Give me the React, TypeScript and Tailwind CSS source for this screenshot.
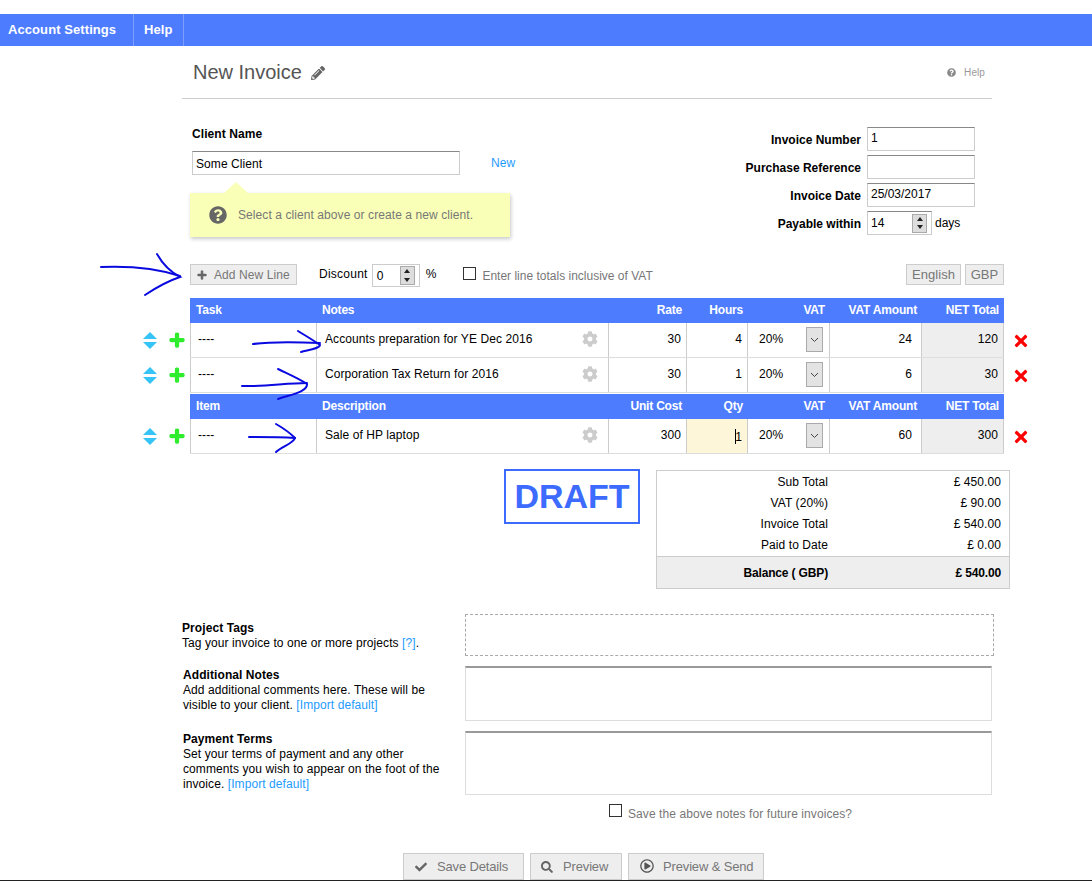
import { FaCheck, FaCog, FaPencilAlt, FaPlus, FaQuestionCircle, FaRegPlayCircle, FaSearch, FaTimes } from "react-icons/fa";

const cols = "grid grid-cols-[127px_292px_78px_61px_82px_92px_82px] w-[814px]";

const Stepper = () => (
  <span className="ml-auto mr-[4px] flex h-[19px] w-[15px] flex-col items-center justify-around border border-[#aaa] bg-[#ddd]">
    <span className="h-0 w-0 border-x-[3px] border-b-[4px] border-x-transparent border-b-[#222]" />
    <span className="h-0 w-0 border-x-[3px] border-t-[4px] border-x-transparent border-t-[#222]" />
  </span>
);

const Field = ({ value, className }: { value: string; className: string }) => (
  <input
    readOnly
    value={value}
    className={`border border-[#ccc] border-t-[#888] bg-white px-[3px] text-[12px] text-black outline-none ${className}`}
  />
);

const HeaderRow = ({ labels }: { labels: string[] }) => (
  <div className="ml-[190px] h-[25px] w-[814px]">
    <div className={`${cols} h-full items-center bg-[#4d7cff] pb-[2px] text-[12px] font-bold tracking-[-0.2px] text-white`}>
      <span className="pl-[6px]">{labels[0]}</span>
      <span className="pl-[5px]">{labels[1]}</span>
      <span className="pr-[5px] text-right">{labels[2]}</span>
      <span className="pr-[5px] text-right">{labels[3]}</span>
      <span className="pr-[5px] text-right">VAT</span>
      <span className="pr-[5px] text-right">VAT Amount</span>
      <span className="pr-[5px] text-right">NET Total</span>
    </div>
  </div>
);

type Line = { notes: string; rate: string; qty: string; vat: string; net: string; editing?: boolean };

const LineRow = ({ line }: { line: Line }) => (
  <div className="flex h-[35px]">
    <div className="flex w-[190px] justify-end pt-[8px]">
      <span className="mr-[12px] flex flex-col gap-[3px] pt-[1px]">
        <span className="h-0 w-0 border-x-[7px] border-b-[7px] border-x-transparent border-b-[#35c4f5]" />
        <span className="h-0 w-0 border-x-[7px] border-t-[7px] border-x-transparent border-t-[#35c4f5]" />
      </span>
      <FaPlus className="mr-[5px] mt-[1px] text-[16px] text-[#2fec2f]" stroke="currentColor" strokeWidth={40} />
    </div>
    <div className={`${cols} border-b border-b-[#ddd] text-[12px] text-black`}>
      <div className="border-l border-r border-[#ccc] pl-[7px] pt-[7px]">----</div>
      <div className="flex justify-between border-r border-[#ccc] pl-[8px] pr-[10px] pt-[7px]">
        <span>{line.notes}</span>
        <FaCog className="mt-[1px] text-[16px] text-[#ccc]" />
      </div>
      <div className="border-r border-[#ccc] pr-[5px] pt-[7px] text-right">{line.rate}</div>
      <div className={`border-r border-[#ccc] pr-[5px] pt-[7px] text-right ${line.editing ? "bg-[#fdf6d8]" : ""}`}>
        {line.editing && <span className="mr-[-1px] inline-block h-[15px] w-px translate-y-[3px] bg-black" />}
        {line.qty}
      </div>
      <div className="flex justify-between border-r border-[#ccc] pl-[11px] pr-[6px] pt-[4px]">
        <span className="pt-[3px]">20%</span>
        <span className="flex h-[25px] w-[17px] items-center justify-center border border-[#aaa] bg-[#e3e3e3]">
          <svg width="9" height="6" viewBox="0 0 9 6" fill="none" stroke="#444" strokeWidth="1">
            <path d="M1 1l3.5 3.5L8 1" />
          </svg>
        </span>
      </div>
      <div className="border-r border-[#ccc] pr-[9px] pt-[7px] text-right">{line.vat}</div>
      <div className="border-r border-[#ccc] bg-[#eee] pr-[5px] pt-[7px] text-right">{line.net}</div>
    </div>
    <FaTimes className="ml-[8px] mt-[9px] text-[18px] text-[#f00]" />
  </div>
);

const Total = ({ label, value }: { label: string; value: string }) => (
  <div className="flex h-[21px] items-center justify-end">
    <span>{label}</span>
    <span className="w-[181px] pr-[8px] text-right">{value}</span>
  </div>
);

const ActionButton = ({ icon, label, className }: { icon: React.ReactNode; label: string; className: string }) => (
  <button className={`flex h-[27px] items-center border border-[#ccc] bg-[#eee] text-[13px] tracking-[-0.15px] text-[#777] ${className}`}>
    {icon}
    {label}
  </button>
);

const Link = ({ children }: { children: React.ReactNode }) => <a className="text-[#1e9bff]">{children}</a>;

export default function App() {
  return (
    <div className="relative h-[881px] w-[1092px] overflow-hidden bg-white font-['Liberation_Sans',Arial,sans-serif] text-[12px] tracking-[0.08px]">
      <nav className="mt-[14px] flex h-[32px] items-center bg-[#4d7cff] text-[13px] font-bold text-white">
        <span className="flex h-full w-[134px] items-center border-r border-[#7d9fff] pl-[8px]">Account Settings</span>
        <span className="flex h-full w-[50px] items-center border-r border-[#7d9fff] pl-[10px]">Help</span>
      </nav>

      <header className="ml-[182px] flex h-[53px] w-[810px] items-center justify-between border-b border-[#ccc] pl-[11px]">
        <div className="flex items-center gap-[9px]">
          <h1 className="text-[20px] tracking-normal text-[#555]">New Invoice</h1>
          <FaPencilAlt className="mt-[2px] text-[14px] text-[#666]" />
        </div>
        <div className="flex items-center gap-[8px] pr-[7px] text-[10px] text-[#999]">
          <FaQuestionCircle className="text-[9px] text-[#888]" />
          Help
        </div>
      </header>

      <section className="mt-[27px] flex h-[138px] w-[975px] justify-between pl-[190px]">
        <div className="w-[330px]">
          <label className="block pl-[2px] pt-[1px] font-bold leading-[14px] text-black">Client Name</label>
          <div className="mt-[10px] flex items-center">
            <Field value="Some Client" className="ml-[2px] h-[24px] w-[268px] pt-[1px]" />
            <a className="ml-[31px] text-[#1e9bff]">New</a>
          </div>
          <div className="relative mt-[18px] flex h-[44px] w-[320px] items-center bg-[#f9ffb6] pl-[19px] text-[#777] shadow-[1px_2px_4px_rgba(0,0,0,0.22)]">
            <span className="absolute left-[34px] top-[-11px] h-0 w-0 border-x-[12px] border-b-[11px] border-x-transparent border-b-[#f9ffb6]" />
            <FaQuestionCircle className="mr-[11px] text-[18px] text-[#666]" />
            Select a client above or create a new client.
          </div>
        </div>
        <div className="flex flex-col gap-[4px] pt-[1px] tracking-normal">
          {[
            ["Invoice Number", "1"],
            ["Purchase Reference", ""],
            ["Invoice Date", "25/03/2017"],
          ].map(([label, value]) => (
            <div key={label} className="flex items-center justify-end gap-[6px]">
              <span className="pt-[1px] font-bold text-black">{label}</span>
              <Field value={value} className="h-[24px] w-[108px] pb-[2px]" />
            </div>
          ))}
          <div className="flex items-center justify-end gap-[6px]">
            <span className="pt-[1px] font-bold text-black">Payable within</span>
            <div className="flex h-[24px] w-[108px]">
              <span className="flex w-[65px] items-center border border-[#ccc] border-t-[#888] pl-[3px] text-black">
                14
                <Stepper />
              </span>
              <span className="pl-[3px] pt-[3px] text-black">days</span>
            </div>
          </div>
        </div>
      </section>

      <section className="flex h-[34px] w-[1004px] items-start pl-[190px]">
        <button className="flex h-[21px] w-[107px] items-center border border-[#ccc] bg-[#eee] pl-[6px] text-[#777]">
          <FaPlus className="mr-[7px] text-[10px] text-[#666]" stroke="currentColor" strokeWidth={30} />
          Add New Line
        </button>
        <span className="ml-[22px] pt-[1px] tracking-[0.25px] text-black">Discount</span>
        <span className="ml-[4px] flex h-[23px] w-[48px] items-center border border-[#ccc] pl-[4px] text-black">
          0
          <Stepper />
        </span>
        <span className="ml-[6px] pt-[1px] text-black">%</span>
        <span className="ml-[27px] mt-[3px] h-[13px] w-[13px] border border-[#333]" />
        <span className="ml-[6px] pt-[3px] tracking-normal text-[#777]">Enter line totals inclusive of VAT</span>
        <button className="ml-auto h-[21px] w-[55px] border border-[#ccc] bg-[#eee] text-[13px] text-[#777]">English</button>
        <button className="ml-[4px] h-[21px] w-[39px] border border-[#ccc] bg-[#eee] text-[13px] text-[#777]">GBP</button>
      </section>

      <HeaderRow labels={["Task", "Notes", "Rate", "Hours"]} />
      <LineRow line={{ notes: "Accounts preparation for YE Dec 2016", rate: "30", qty: "4", vat: "24", net: "120" }} />
      <LineRow line={{ notes: "Corporation Tax Return for 2016", rate: "30", qty: "1", vat: "6", net: "30" }} />
      <div className="h-[1px]" />
      <HeaderRow labels={["Item", "Description", "Unit Cost", "Qty"]} />
      <LineRow line={{ notes: "Sale of HP laptop", rate: "300", qty: "1", vat: "60", net: "300", editing: true }} />

      <section className="mt-[15px] flex items-start pl-[504px]">
        <div className="flex h-[55px] w-[136px] items-center justify-center border-2 border-[#3d6bff] text-[34px] font-bold tracking-normal text-[#3d6bff]">DRAFT</div>
        <div className="ml-[16px] mt-[1px] w-[354px] border border-[#ccc] text-black">
          <Total label="Sub Total" value="£ 450.00" />
          <Total label="VAT (20%)" value="£ 90.00" />
          <Total label="Invoice Total" value="£ 540.00" />
          <Total label="Paid to Date" value="£ 0.00" />
          <div className="mt-[1px] flex h-[32px] items-center justify-end border-t border-[#ccc] bg-[#eee] font-bold tracking-[-0.15px]">
            <span>Balance ( GBP)</span>
            <span className="w-[181px] pr-[8px] text-right">£ 540.00</span>
          </div>
        </div>
      </section>

      <section className="mt-[25px] grid grid-cols-[283px_529px] pl-[182px] leading-[15px] text-black">
        <div className="pt-[7px]">
          <b>Project Tags</b>
          <p>
            Tag your invoice to one or more projects <Link>[?]</Link>.
          </p>
        </div>
        <div className="h-[42px] border border-dashed border-[#aaa]" />
        <div className="mt-[10px] pl-[1px] pt-[2px]">
          <b>Additional Notes</b>
          <p className="w-[260px]">
            Add additional comments here. These will be visible to your client. <Link>[Import default]</Link>
          </p>
        </div>
        <div className="mt-[10px] h-[55px] w-[527px] border border-[#ddd] border-t-2 border-t-[#999]" />
        <div className="mt-[10px] pl-[1px] pt-[1px]">
          <b>Payment Terms</b>
          <p className="w-[262px]">
            Set your terms of payment and any other comments you wish to appear on the foot of the invoice. <Link>[Import default]</Link>
          </p>
        </div>
        <div className="mt-[10px] h-[64px] w-[527px] border border-[#ddd] border-t-2 border-t-[#999]" />
      </section>

      <div className="mt-[9px] flex items-start pl-[609px] text-[#777]">
        <span className="h-[13px] w-[13px] border border-[#333]" />
        <span className="ml-[6px] pt-[1px]">Save the above notes for future invoices?</span>
      </div>

      <div className="mt-[30px] flex gap-[6px] pl-[403px]">
        <ActionButton icon={<FaCheck className="mr-[10px] text-[12px] text-[#666]" />} label="Save Details" className="w-[121px] pl-[11px]" />
        <ActionButton icon={<FaSearch className="mr-[10px] text-[12px] text-[#666]" />} label="Preview" className="w-[92px] pl-[10px]" />
        <ActionButton icon={<FaRegPlayCircle className="mb-[2px] mr-[9px] text-[14px] text-[#555]" />} label="Preview & Send" className="w-[136px] pl-[11px]" />
      </div>
      <div className="absolute bottom-0 left-0 h-px w-full bg-[#222]" />

      <svg className="pointer-events-none absolute left-0 top-0" width="1092" height="881" fill="none" stroke="#0a0ae0" strokeWidth="2" strokeLinecap="round">
        <path d="M101 267c25-1 55 1 79 9" />
        <path d="M157 254c5 9 12 17 23 23c-12 4-23 10-35 18" />
        <path d="M253 344c22-3 45-2 67-1" />
        <path d="M298 331c8 5 15 9 22 14c-1 4-12 5-19 7" />
        <path d="M242 386c22 1 44-3 65-3" />
        <path d="M278 369c10 5 20 9 29 15c1 8-18 11-29 15" />
        <path d="M249 437c16 0 31 0 46 1" />
        <path d="M276 424c7 4 14 9 19 14c-2 6-13 8-19 14" />
      </svg>
    </div>
  );
}
